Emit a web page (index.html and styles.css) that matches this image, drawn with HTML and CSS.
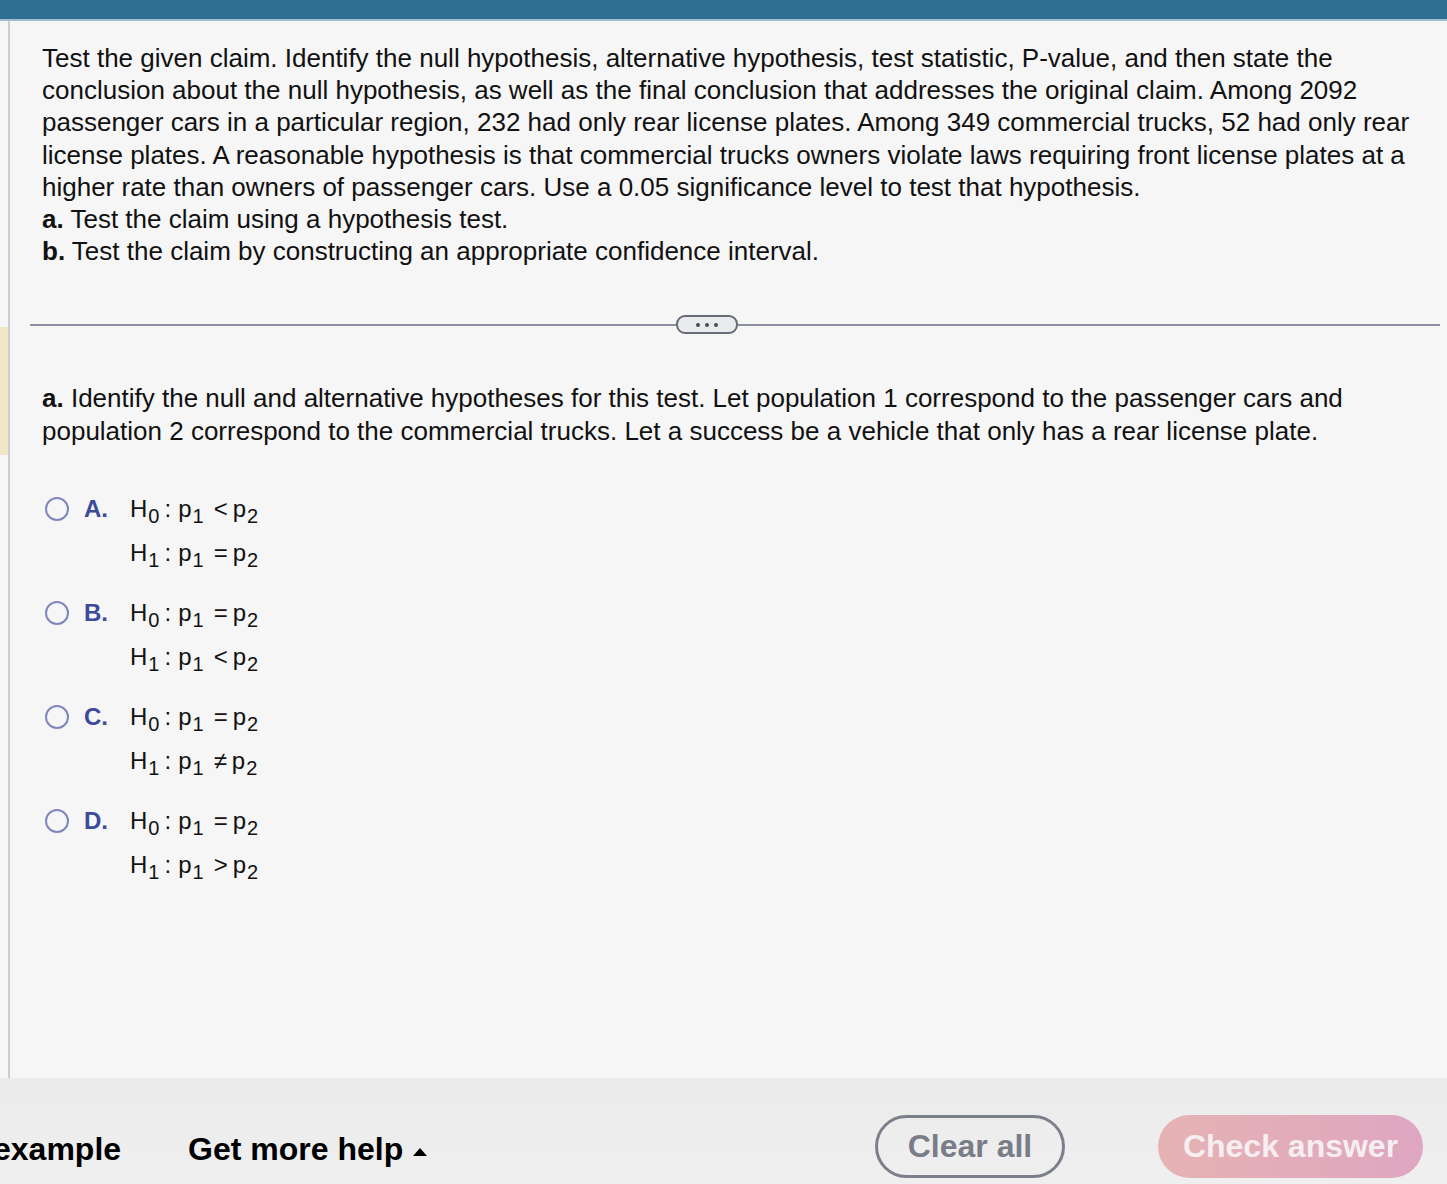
FILE: index.html
```html
<!DOCTYPE html>
<html>
<head>
<meta charset="utf-8">
<link rel="stylesheet" href="styles.css">
</head>
<body>
<div class="topbar"></div>
<div class="page">
  <div class="gutter"><div class="marker"></div></div>
  <div class="main">
    <p class="stem">Test the given claim. Identify the null hypothesis, alternative hypothesis, test statistic, P-value, and then state the conclusion about the null hypothesis, as well as the final conclusion that addresses the original claim. Among 2092 passenger cars in a particular region, 232 had only rear license plates. Among 349 commercial trucks, 52 had only rear license plates. A reasonable hypothesis is that commercial trucks owners violate laws requiring front license plates at a higher rate than owners of passenger cars. Use a 0.05 significance level to test that hypothesis.<br><b>a.</b> Test the claim using a hypothesis test.<br><b>b.</b> Test the claim by constructing an appropriate confidence interval.</p>
    <div class="divider">
      <div class="rule rule-left"></div>
      <div class="more"><span class="dot"></span><span class="dot"></span><span class="dot"></span></div>
      <div class="rule rule-right"></div>
    </div>
    <p class="question"><b>a.</b> Identify the null and alternative hypotheses for this test. Let population 1 correspond to the passenger cars and population 2 correspond to the commercial trucks. Let a success be a vehicle that only has a rear license plate.</p>
    <div class="options">
      <div class="option">
        <span class="radio"></span><span class="letter">A.</span>
        <div class="math">
          <div class="mline">H<sub>0</sub><span class="colon">:</span>p<sub>1</sub><span class="op">&lt;</span>p<sub>2</sub></div>
          <div class="mline">H<sub>1</sub><span class="colon">:</span>p<sub>1</sub><span class="op">=</span>p<sub>2</sub></div>
        </div>
      </div>
      <div class="option">
        <span class="radio"></span><span class="letter">B.</span>
        <div class="math">
          <div class="mline">H<sub>0</sub><span class="colon">:</span>p<sub>1</sub><span class="op">=</span>p<sub>2</sub></div>
          <div class="mline">H<sub>1</sub><span class="colon">:</span>p<sub>1</sub><span class="op">&lt;</span>p<sub>2</sub></div>
        </div>
      </div>
      <div class="option">
        <span class="radio"></span><span class="letter">C.</span>
        <div class="math">
          <div class="mline">H<sub>0</sub><span class="colon">:</span>p<sub>1</sub><span class="op">=</span>p<sub>2</sub></div>
          <div class="mline">H<sub>1</sub><span class="colon">:</span>p<sub>1</sub><span class="op">&ne;</span>p<sub>2</sub></div>
        </div>
      </div>
      <div class="option">
        <span class="radio"></span><span class="letter">D.</span>
        <div class="math">
          <div class="mline">H<sub>0</sub><span class="colon">:</span>p<sub>1</sub><span class="op">=</span>p<sub>2</sub></div>
          <div class="mline">H<sub>1</sub><span class="colon">:</span>p<sub>1</sub><span class="op">&gt;</span>p<sub>2</sub></div>
        </div>
      </div>
    </div>
  </div>
</div>
<div class="footer">
  <span class="link example">example</span>
  <span class="link help">Get more help <span class="tri"></span></span>
  <span class="spacer"></span>
  <span class="btn clear">Clear all</span>
  <span class="btn check">Check answer</span>
</div>
</body>
</html>
```
FILE: styles.css
```css
html, body {
  margin: 0;
  padding: 0;
  background: #f6f6f6;
  font-family: "Liberation Sans", Arial, Helvetica, sans-serif;
  color: #111;
  overflow: hidden;
}
.topbar {
  height: 19px;
  background: #2f7092;
  border-bottom: 2px solid #a3bccb;
}
.page {
  display: flex;
  height: 1057px;
}
.gutter {
  width: 8px;
  flex: none;
}
.marker {
  margin-top: 306px;
  height: 128px;
  background: #f2e6c5;
}
.main {
  flex: 1;
  border-left: 2px solid #c9cdd6;
  padding-left: 32px;
  padding-right: 14px;
}
.stem {
  margin: 21px 0 0 0;
  font-size: 26px;
  line-height: 32.2px;
}
.divider {
  display: flex;
  align-items: center;
  margin: 48px -7px 0 -12px;
}
.rule {
  height: 2px;
  background: #8b8fa0;
}
.rule-left {
  width: 646px;
  flex: none;
}
.rule-right {
  flex: 1;
}
.more {
  width: 58px;
  height: 15px;
  border: 2px solid #676b76;
  border-radius: 9px;
  background: #eaebef;
  display: flex;
  align-items: center;
  justify-content: center;
  gap: 5px;
}
.dot {
  width: 4px;
  height: 4px;
  border-radius: 50%;
  background: #4a4d55;
}
.question {
  margin: 48px 0 0 0;
  font-size: 26px;
  line-height: 32.2px;
}
.options {
  margin-top: 40px;
  display: flex;
  flex-direction: column;
  gap: 16px;
}
.option {
  display: flex;
  align-items: flex-start;
}
.radio {
  width: 20px;
  height: 20px;
  border: 2px solid #7f87ba;
  border-radius: 50%;
  margin: 10px 0 0 3px;
  flex: none;
  box-sizing: content-box;
}
.letter {
  width: 45px;
  margin-left: 15px;
  font-weight: bold;
  color: #3c4a9c;
  font-size: 24px;
  line-height: 44px;
  flex: none;
}
.math {
  font-size: 24px;
  margin-left: 1px;
}
.mline {
  height: 44px;
  line-height: 44px;
  white-space: nowrap;
}
.mline sub {
  font-size: 20px;
  vertical-align: -6px;
  line-height: 0;
  margin-left: 1px;
}
.colon {
  margin: 0 7px 0 5px;
}
.op {
  margin: 0 5px 0 10px;
}
.footer {
  height: 106px;
  background: linear-gradient(#ebebeb, #efefef);
  display: flex;
  align-items: flex-start;
  padding-top: 37px;
  box-sizing: border-box;
}
.link {
  font-weight: bold;
  font-size: 32px;
  color: #000;
  line-height: 63px;
  padding-top: 3px;
}
.example {
  margin-left: -7px;
}
.help {
  margin-left: 67px;
  display: inline-flex;
  align-items: center;
}
.tri {
  width: 0;
  height: 0;
  border-left: 7px solid transparent;
  border-right: 7px solid transparent;
  border-bottom: 8px solid #000;
  margin-left: 10px;
  margin-top: 4px;
}
.spacer {
  flex: 1;
}
.btn {
  height: 63px;
  border-radius: 32px;
  box-sizing: border-box;
  display: flex;
  align-items: center;
  justify-content: center;
  font-weight: bold;
  font-size: 32px;
}
.clear {
  width: 190px;
  border: 3px solid #7b7f89;
  color: #797d87;
}
.check {
  width: 265px;
  margin-left: 93px;
  margin-right: 24px;
  background: linear-gradient(90deg, #e6b3b3, #dea6c1);
  color: #f6eef1;
}
```
